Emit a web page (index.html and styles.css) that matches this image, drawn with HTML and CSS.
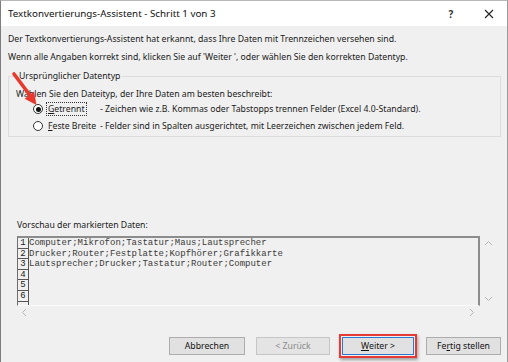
FILE: index.html
```html
<!DOCTYPE html>
<html lang='de'>
<head>
    <meta charset='UTF-8'>
    <title>Textkonvertierungs-Assistent</title>
    <link rel="stylesheet" href="styles.css">
</head>
<body>
    <div class='dialog'>
        <div class='titlebar'>
            <span class='title'>Textkonvertierungs-Assistent - Schritt 1 von 3</span>
            <span class='tb-help'>?</span>
            <span class='tb-close'>
                <svg width='10' height='10' viewBox='0 0 10 10'><path d='M1 1 L9 9 M9 1 L1 9' stroke='#222' stroke-width='1.1' fill='none'/></svg>
            </span>
        </div>
        <div class='content'>
            <p class='intro first'>Der Textkonvertierungs-Assistent hat erkannt, dass Ihre Daten mit Trennzeichen versehen sind.</p>
            <p class='intro'>Wenn alle Angaben korrekt sind, klicken Sie auf 'Weiter ', oder wählen Sie den korrekten Datentyp.</p>
            <fieldset class='group'>
                <legend>Ursprünglicher Datentyp</legend>
                <p class='group-hint'>Wählen Sie den Dateityp, der Ihre Daten am besten beschreibt:</p>
                <div class='option first'>
                    <span class='radio checked'></span>
                    <span class='opt-name'><span class='focus'><u>G</u>etrennt</span></span>
                    <span class='opt-desc'>- Zeichen wie z.B. Kommas oder Tabstopps trennen Felder (Excel 4.0-Standard).</span>
                </div>
                <div class='option'>
                    <span class='radio'></span>
                    <span class='opt-name'><span class='nofocus'><u>F</u>este Breite</span></span>
                    <span class='opt-desc'>- Felder sind in Spalten ausgerichtet, mit Leerzeichen zwischen jedem Feld.</span>
                </div>
            </fieldset>
            <p class='preview-label'>Vorschau der markierten Daten:</p>
            <div class='preview'>
                <div class='preview-top'>
                    <div class='list'>
                        <div class='row'><span class='num'>1</span><span class='txt'>Computer;Mikrofon;Tastatur;Maus;Lautsprecher</span></div>
                        <div class='row'><span class='num'>2</span><span class='txt'>Drucker;Router;Festplatte;Kopfhörer;Grafikkarte</span></div>
                        <div class='row'><span class='num'>3</span><span class='txt'>Lautsprecher;Drucker;Tastatur;Router;Computer</span></div>
                        <div class='row'><span class='num'>4</span><span class='txt'></span></div>
                        <div class='row'><span class='num'>5</span><span class='txt'></span></div>
                        <div class='row'><span class='num'>6</span><span class='txt'></span></div>
                        <div class='row'><span class='num'></span><span class='txt'></span></div>
                    </div>
                    <div class='vscroll'>
                        <svg width='9' height='6' viewBox='0 0 9 6'><path d='M1 5 L4.5 1.5 L8 5' stroke='#b4b4b4' fill='none'/></svg>
                        <svg width='9' height='6' viewBox='0 0 9 6'><path d='M1 1 L4.5 4.5 L8 1' stroke='#b4b4b4' fill='none'/></svg>
                    </div>
                </div>
                <div class='hscroll'>
                    <svg width='6' height='9' viewBox='0 0 6 9'><path d='M5 1 L1.5 4.5 L5 8' stroke='#b4b4b4' fill='none'/></svg>
                    <svg width='6' height='9' viewBox='0 0 6 9'><path d='M1 1 L4.5 4.5 L1 8' stroke='#b4b4b4' fill='none'/></svg>
                </div>
            </div>
            <div class='buttons'>
                <span class='btn cancel'>Abbrechen</span>
                <span class='btn back disabled'>&lt; Zurück</span>
                <span class='highlight'><span class='btn default'><u>W</u>eiter &gt;</span></span>
                <span class='btn finish'>Fe<u>r</u>tig stellen</span>
            </div>
        </div>
        <svg class='arrow' width='44' height='110' viewBox='0 0 44 110'>
            <path d='M13 73 L29.5 95' stroke='#e8392f' stroke-width='3.6' stroke-linecap='round' fill='none'/>
            <polygon points='35.5,104 23.6,97.8 33.1,90.6' fill='#e8392f'/>
        </svg>
    </div>
</body>
</html>
```

FILE: styles.css
```css
* { box-sizing: border-box; }
html, body { margin: 0; padding: 0; background: #f0f0f0; }
body { font-family: "Noto Sans", "Open Sans", sans-serif; font-size: 8.7px; color: #1a1a1a; }
p { margin: 0; }
.dialog { position: relative; width: 508px; height: 362px; background: #f0f0f0; border-left: 1px solid #7d7d7d; border-right: 1px solid #9a9a9a; border-top: 1px solid #b8b8b8; overflow: hidden; }
.titlebar { height: 25px; background: #fff; display: flex; align-items: center; padding-left: 7px; }
.title { font-size: 9.8px; color: #111; flex: 1; }
.tb-help { width: 14px; text-align: center; font-size: 10px; font-weight: bold; color: #333; margin-right: 24px; }
.tb-close { width: 14px; display: flex; justify-content: center; margin-right: 11px; }
.content { padding: 0 6px 0 7px; }
.intro { line-height: 12px; margin-top: 6px; }
.intro.first { margin-top: 7px; }
.group { margin: 7px 0 0 0; padding: 0 6px 3px 7px; border: 1px solid #dcdcdc; border-radius: 0; }
.group legend { padding: 0 2px; margin-left: 1px; line-height: 12px; }
.group-hint { line-height: 12px; margin-top: 6px; }
.option { display: flex; align-items: center; height: 14px; margin-top: 2px; }
.option.first { margin-top: 2px; }
.option + .option { margin-top: 3px; }
.radio { width: 10px; height: 10px; border: 1px solid #333; border-radius: 50%; background: #fff; margin-left: 17px; margin-right: 3px; display: flex; align-items: center; justify-content: center; }
.radio.checked::after { content: ''; width: 5px; height: 5px; border-radius: 50%; background: #111; }
.opt-name { width: 54px; flex: none; }
.focus { display: inline-block; border: 1px dotted #333; padding: 0 1px; line-height: 12px; }
.nofocus { display: inline-block; border: 1px solid transparent; padding: 0 1px; line-height: 12px; }
.opt-desc { line-height: 12px; }
.preview-label { line-height: 12px; margin-top: 82px; padding-left: 9px; }
.preview { margin: 5px 0 0 9px; width: 480px; }
.preview-top { display: flex; }
.list { width: 463px; height: 70px; border-top: 2px solid #8c8c8c; border-left: 1px solid #6e6e6e; border-right: 2px solid #8c8c8c; border-bottom: 1px solid #fbfbfb; overflow: hidden; }
.row { display: flex; height: 10.6px; font-family: "Liberation Mono", "Courier New", monospace; font-size: 9px; line-height: 10.6px; color: #3a3a3a; }
.num { width: 11px; flex: none; text-align: center; border-right: 1px solid #555; border-bottom: 1px solid #555; color: #222; }
.txt { white-space: pre; }
.vscroll { width: 17px; display: flex; flex-direction: column; justify-content: space-between; align-items: center; padding: 4px 0 4px 0; }
.hscroll { width: 463px; height: 13px; display: flex; justify-content: space-between; align-items: center; padding: 0 5px 0 4px; }
.buttons { display: flex; justify-content: flex-end; align-items: center; margin-top: 15px; }
.btn { display: inline-flex; align-items: center; justify-content: center; width: 75px; height: 18px; background: #e1e1e1; border: 1px solid #adadad; color: #111; }
.btn.cancel { width: 76px; }
.btn.back { width: 74px; margin-left: 11px; }
.btn.finish { width: 75px; margin-left: 9px; }
.btn.disabled { color: #8a8a8a; border-color: #c6c6c6; background: #e4e4e4; }
.btn.default { width: 72px; border: 1px solid #2a7ad0; }
.highlight { display: inline-flex; border: 2px solid #e53a36; padding: 1px; margin-left: 9px; box-shadow: 1px 2px 3px rgba(0, 0, 0, 0.35); }
.arrow { position: absolute; left: 0; top: 0; }
```
